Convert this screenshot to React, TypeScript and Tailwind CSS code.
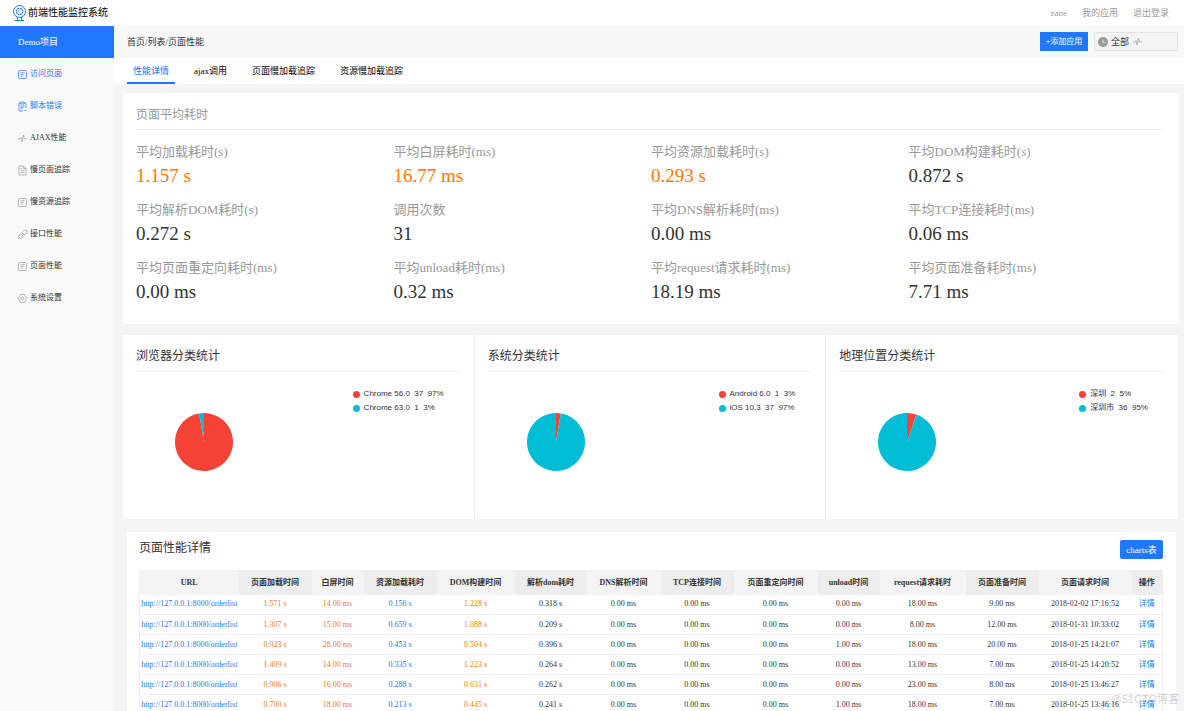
import React, { useState } from 'react';

const TABS = ['性能详情', 'ajax调用', '页面慢加载追踪', '资源慢加载追踪'];

const METRICS = [
  { label: '平均加载耗时(s)', value: '1.157 s', hot: true },
  { label: '平均白屏耗时(ms)', value: '16.77 ms', hot: true },
  { label: '平均资源加载耗时(s)', value: '0.293 s', hot: true },
  { label: '平均DOM构建耗时(s)', value: '0.872 s' },
  { label: '平均解析DOM耗时(s)', value: '0.272 s' },
  { label: '调用次数', value: '31' },
  { label: '平均DNS解析耗时(ms)', value: '0.00 ms' },
  { label: '平均TCP连接耗时(ms)', value: '0.06 ms' },
  { label: '平均页面重定向耗时(ms)', value: '0.00 ms' },
  { label: '平均unload耗时(ms)', value: '0.32 ms' },
  { label: '平均request请求耗时(ms)', value: '18.19 ms' },
  { label: '平均页面准备耗时(ms)', value: '7.71 ms' },
];

const RED = '#f44336';
const CYAN = '#00bcd4';

const CHARTS = [
  {
    title: '浏览器分类统计',
    items: [
      { name: 'Chrome 56.0', count: 37, percent: 97, color: RED },
      { name: 'Chrome 63.0', count: 1, percent: 3, color: CYAN },
    ],
  },
  {
    title: '系统分类统计',
    items: [
      { name: 'Android 6.0', count: 1, percent: 3, color: RED },
      { name: 'iOS 10.3', count: 37, percent: 97, color: CYAN },
    ],
  },
  {
    title: '地理位置分类统计',
    items: [
      { name: '深圳', count: 2, percent: 5, color: RED },
      { name: '深圳市', count: 36, percent: 95, color: CYAN },
    ],
  },
];

const COLUMNS = [
  { title: 'URL', width: 'w-[99px]' },
  { title: '页面加载时间', width: 'w-[73px]' },
  { title: '白屏时间', width: 'w-[52px]' },
  { title: '资源加载耗时', width: 'w-[73px]' },
  { title: 'DOM构建时间', width: 'w-[78px]' },
  { title: '解析dom耗时', width: 'w-[72px]' },
  { title: 'DNS解析时间', width: 'w-[74px]' },
  { title: 'TCP连接时间', width: 'w-[73px]' },
  { title: '页面重定向时间', width: 'w-[84px]' },
  { title: 'unload时间', width: 'w-[62px]' },
  { title: 'request请求耗时', width: 'w-[86px]' },
  { title: '页面准备时间', width: 'w-[73px]' },
  { title: '页面请求时间', width: 'w-[93px]' },
  { title: '操作', width: 'w-[31px]' },
];

const CELL_COLORS = ['text-[#f27a1a]', 'text-[#f27a1a]', 'text-[#2277f8]', 'text-[#f27a1a]'];

const ROWS = [
  ['1.571 s', '14.00 ms', '0.156 s', '1.228 s', '0.318 s', '0.00 ms', '0.00 ms', '0.00 ms', '0.00 ms', '18.00 ms', '9.00 ms', '2018-02-02 17:16:52'],
  ['1.307 s', '15.00 ms', '0.659 s', '1.088 s', '0.209 s', '0.00 ms', '0.00 ms', '0.00 ms', '0.00 ms', '8.00 ms', '12.00 ms', '2018-01-31 10:33:02'],
  ['0.923 s', '28.00 ms', '0.453 s', '0.504 s', '0.396 s', '0.00 ms', '0.00 ms', '0.00 ms', '1.00 ms', '18.00 ms', '20.00 ms', '2018-01-25 14:21:07'],
  ['1.499 s', '14.00 ms', '0.335 s', '1.223 s', '0.264 s', '0.00 ms', '0.00 ms', '0.00 ms', '0.00 ms', '13.00 ms', '7.00 ms', '2018-01-25 14:20:52'],
  ['0.906 s', '16.00 ms', '0.288 s', '0.631 s', '0.262 s', '0.00 ms', '0.00 ms', '0.00 ms', '0.00 ms', '23.00 ms', '8.00 ms', '2018-01-25 13:46:27'],
  ['0.700 s', '18.00 ms', '0.213 s', '0.445 s', '0.241 s', '0.00 ms', '0.00 ms', '0.00 ms', '1.00 ms', '18.00 ms', '7.00 ms', '2018-01-25 13:46:16'],
];

function Icon({ children }: { children: React.ReactNode }) {
  return (
    <svg viewBox="0 0 18 18" fill="none" stroke="currentColor" strokeWidth="1.4" className="size-[9px] shrink-0 overflow-visible" aria-hidden="true">
      {children}
    </svg>
  );
}

const ListIcon = () => (
  <Icon>
    <rect x="1" y="1" width="16" height="16" rx="2" />
    <path d="M5 5.5h8M5 9h6M5 12.5h4" />
  </Icon>
);

const ErrorIcon = () => (
  <Icon>
    <path d="M5 2H2v16h8M12 2h4v10M5 0h7v4H5zM5 8h8M5 11h6M5 14h4M13 17h4" />
  </Icon>
);

const PulseIcon = () => (
  <Icon>
    <path d="M0 10h4l2-3 2 9L11 2l2 8h5" strokeLinejoin="round" />
  </Icon>
);

const FileIcon = () => (
  <Icon>
    <path d="M2 0h9l5 5v13H2zM11 0v5h5M5 9h8M5 13h8M5 5h3" />
  </Icon>
);

const PlugIcon = () => (
  <Icon>
    <g transform="rotate(-45 9 9)">
      <rect x="0" y="5" width="8" height="8" rx="3" />
      <rect x="11" y="5" width="8" height="8" rx="3" />
      <path d="M-4 9h4M19 9h4M8 7.500h3M8 10.500h3" />
    </g>
  </Icon>
);

const GearIcon = () => (
  <Icon>
    <path d="M5 1h8l1.500 3.500L18 9l-3.500 4.500L13 17H5l-1.500-3.500L0 9l3.500-4.500z" strokeLinejoin="round" />
    <circle cx="9" cy="9" r="3" />
  </Icon>
);

const MENU = [
  { label: '访问页面', icon: ListIcon, active: true },
  { label: '脚本错误', icon: ErrorIcon, active: true },
  { label: 'AJAX性能', icon: PulseIcon },
  { label: '慢页面追踪', icon: FileIcon },
  { label: '慢资源追踪', icon: ListIcon },
  { label: '接口性能', icon: PlugIcon },
  { label: '页面性能', icon: ListIcon },
  { label: '系统设置', icon: GearIcon },
];

function Logo() {
  return (
    <svg viewBox="0 0 26 32" fill="none" stroke="#2277f8" strokeWidth="2" className="h-4 w-[13px]" aria-hidden="true">
      <circle cx="13" cy="13" r="12" />
      <circle cx="13" cy="13" r="6.500" />
      <path d="M11 13a2 2 0 0 1 2-2M9 24v6M17 24v6M4 31h18" />
    </svg>
  );
}

// The first slice starts at twelve o'clock and the two of them fill the disc
function Pie({ items }: { items: { count: number; color: string }[] }) {
  const total = items.reduce((sum, i) => sum + i.count, 0);
  const angle = (items[0].count / total) * Math.PI * 2;
  const x = 29 + 29 * Math.sin(angle);
  const y = 29 - 29 * Math.cos(angle);
  const large = angle > Math.PI ? 1 : 0;
  return (
    <svg viewBox="0 0 58 58" className="mt-[30px] ml-[39px] size-[58px]" role="img">
      <path d={`M29 29V0A29 29 0 ${large} 1 ${x} ${y}Z`} fill={items[0].color} />
      <path d={`M29 29L${x} ${y}A29 29 0 ${1 - large} 1 29 0Z`} fill={items[1].color} />
    </svg>
  );
}

export default function App() {
  const [tab, setTab] = useState(0);

  return (
    <div className="relative flex h-screen flex-col overflow-hidden bg-[#f4f4f4] font-['Liberation_Serif','Noto_Sans_CJK_SC',serif] text-[9px] leading-3 text-[#333]">
      <header className="flex h-[26px] shrink-0 items-center justify-between bg-white pr-[15px] pl-[13px]">
        <div className="flex items-center gap-0.5">
          <Logo />
          <h1 className="text-[10px] text-black">前端性能监控系统</h1>
        </div>
        <nav className="flex gap-[15px] text-[#999]">
          <a href="#user">zane</a>
          <a href="#apps">我的应用</a>
          <a href="#logout">退出登录</a>
        </nav>
      </header>

      <div className="flex min-h-0 flex-1">
        <aside className="w-[114px] shrink-0 bg-[#f9f9f9]">
          <div className="flex h-8 items-center bg-[#1f78ff] pl-[18px] text-white">Demo项目</div>
          <nav>
            {MENU.map(({ label, icon: MenuIcon, active }) => (
              <a key={label} href="#menu" className={`flex h-8 items-center gap-[3px] pl-[18px] text-[8px] ${active ? 'text-[#2277f8]' : 'text-[#333]'}`}>
                <span className={active ? 'flex' : 'flex text-[#999]'}><MenuIcon /></span>
                {label}
              </a>
            ))}
          </nav>
        </aside>

        <div className="min-w-0 flex-1">
          <div className="flex h-8 items-center justify-between bg-[#f8f8f8] pr-[6px] pb-px pl-[13px]">
            <div>首页/列表/页面性能</div>
            <div className="flex gap-[6px]">
              <button className="h-[19px] w-12 bg-[#1f78ff] text-[8px] text-white">+添加应用</button>
              <div className="flex h-[19px] w-[84px] items-center gap-[3px] border border-[#e2e2e2] bg-[#f4f4f4] pl-[3px]">
                <svg viewBox="0 0 20 20" className="size-[10px]" aria-hidden="true">
                  <circle cx="10" cy="10" r="10" fill="#999" />
                  <path d="M10 5v6h5" fill="none" stroke="#f4f4f4" strokeWidth="1.500" />
                </svg>
                <select aria-label="时间范围" className="w-[19px] appearance-none bg-transparent">
                  <option>全部</option>
                </select>
                <span className="flex text-[#999]"><PulseIcon /></span>
              </div>
            </div>
          </div>

          <div role="tablist" className="flex h-[26px] gap-[13px] bg-white pl-[13px]">
            {TABS.map((name, i) => (
              <button
                key={name}
                role="tab"
                aria-selected={i === tab}
                onClick={() => setTab(i)}
                className={`border-b-2 px-[6px] pt-0.5 ${i === tab ? 'border-[#2277f8] text-[#2277f8]' : 'border-transparent text-black'}`}
              >
                {name}
              </button>
            ))}
          </div>

          <section className="mt-[9px] mr-[5px] ml-[9px] rounded-[2px] bg-white px-[13px] pb-[18px]">
            <h2 className="border-b border-[#eee] pt-[14px] pb-[6px] text-xs text-[#999]">页面平均耗时</h2>
            <dl className="mt-3 grid grid-cols-4 gap-y-[10px]">
              {METRICS.map(m => (
                <div key={m.label}>
                  <dt className="text-[13px] leading-5 text-[#999]">{m.label}</dt>
                  <dd className={`text-[19px] leading-7 ${m.hot ? 'text-[#ff7800]' : ''}`}>{m.value}</dd>
                </div>
              ))}
            </dl>
          </section>

          <div className="mt-[11px] mr-[6px] ml-[9px] grid grid-cols-3 divide-x divide-[#eee] bg-white">
            {CHARTS.map(chart => (
              <section key={chart.title} className="h-[184px] px-[13px]">
                <h2 className="border-b border-[#eee] pt-[13px] pb-[7px] text-xs">{chart.title}</h2>
                <div className="mt-[11px] flex items-start justify-between pr-[17px]">
                  <Pie items={chart.items} />
                  <ul className="mt-1 font-['Liberation_Sans','Noto_Sans_CJK_SC',sans-serif] text-[8px] leading-[14px]">
                    {chart.items.map(item => (
                      <li key={item.name} className="flex items-center">
                        <span className="mr-1 size-[7px] rounded-full" style={{ background: item.color }} />
                        <span className="whitespace-pre">{`${item.name}  ${item.count}  ${item.percent}%`}</span>
                      </li>
                    ))}
                  </ul>
                </div>
              </section>
            ))}
          </div>

          <section className="mt-[13px] mr-2 ml-[13px] bg-white pt-2 pr-[13px] pl-3">
            <div className="flex items-start justify-between pb-[11px]">
              <h2 className="text-xs">页面性能详情</h2>
              <button className="h-[19px] w-[43px] rounded-[2px] bg-[#1f78ff] text-white">charts表</button>
            </div>
            <table className="w-full table-fixed border-collapse border border-[#eee] text-center text-[8px] whitespace-nowrap">
              <thead>
                <tr className="h-6">
                  {COLUMNS.map(c => (
                    <th key={c.title} scope="col" className={`${c.width} bg-[#f4f4f4] p-0 font-bold even:bg-[#ededed]`}>{c.title}</th>
                  ))}
                </tr>
              </thead>
              <tbody>
                {ROWS.map((row, r) => (
                  <tr key={r} className="h-5 border-b border-[#eee]">
                    <td className="p-0"><a href="#page" className="text-[#2277f8]">http://127.0.0.1:8000/orderlist</a></td>
                    {row.map((cell, i) => (
                      <td key={i} className={`p-0 ${CELL_COLORS[i] ?? ''}`}>{cell}</td>
                    ))}
                    <td className="p-0"><a href="#detail" className="text-[#2277f8]">详情</a></td>
                  </tr>
                ))}
              </tbody>
            </table>
          </section>
        </div>
      </div>

      <div className="pointer-events-none absolute right-[5px] bottom-[5px] font-['Liberation_Sans','Noto_Sans_CJK_SC',sans-serif] text-[11px] leading-[14px] text-black/20">
        @51CTO博客
      </div>
    </div>
  );
}
